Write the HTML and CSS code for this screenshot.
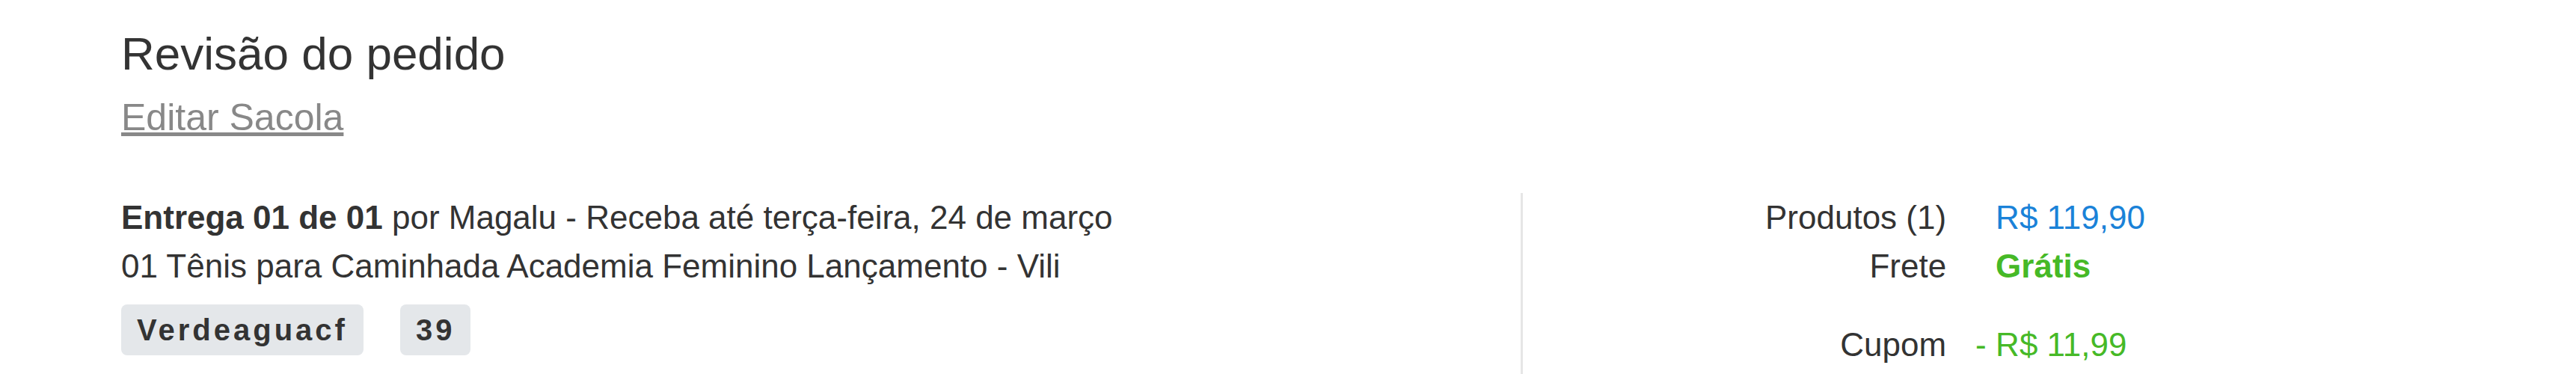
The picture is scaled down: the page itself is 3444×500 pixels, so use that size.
FILE: index.html
```html
<!DOCTYPE html>
<html lang="pt-BR">
<head>
<meta charset="utf-8">
<title>Revisão do pedido</title>
<link rel="stylesheet" href="styles.css">
</head>
<body>
<main class="review">
  <header class="review-head">
    <h1 class="review-title">Revisão do pedido</h1>
    <a class="edit-link" href="#">Editar Sacola</a>
  </header>
  <section class="review-body">
    <div class="delivery">
      <p class="delivery-line"><strong>Entrega 01 de 01</strong> por Magalu - Receba até terça-feira, 24 de março</p>
      <p class="delivery-line">01 Tênis para Caminhada Academia Feminino Lançamento - Vili</p>
      <div class="tags">
        <span class="tag">Verdeaguacf</span>
        <span class="tag">39</span>
      </div>
    </div>
    <div class="summary">
      <div class="summary-grid">
        <span class="label">Produtos (1)</span>
        <span class="value value-blue">R$ 119,90</span>
        <span class="label">Frete</span>
        <span class="value value-free">Grátis</span>
        <span class="label label-gap">Cupom</span>
        <span class="value value-green label-gap"><span class="minus">-</span>R$ 11,99</span>
      </div>
    </div>
  </section>
</main>
</body>
</html>
```

FILE: styles.css
```css
* {
  box-sizing: border-box;
}

html, body {
  margin: 0;
  padding: 0;
  background: #ffffff;
}

body {
  font-family: "Liberation Sans", Arial, sans-serif;
  color: #333333;
}

.review {
  padding: 37px 0 0 162px;
}

.review-head {
  display: flex;
  flex-direction: column;
  align-items: flex-start;
}

.review-title {
  margin: 0;
  font-size: 62px;
  font-weight: 400;
  line-height: 70px;
  color: #333333;
}

.edit-link {
  margin-top: 20px;
  font-size: 50px;
  line-height: 60px;
  color: #888888;
  text-decoration: underline;
}

.review-body {
  display: flex;
  margin-top: 71px;
}

.delivery {
  width: 1871px;
  flex: 0 0 auto;
  padding-bottom: 80px;
}

.delivery-line {
  margin: 0;
  font-size: 44px;
  line-height: 65px;
  color: #333333;
}

.delivery-line strong {
  font-weight: 700;
}

.tags {
  display: flex;
  gap: 49px;
  margin-top: 19px;
}

.tag {
  display: inline-block;
  padding: 10px 21px;
  background: #e4e7ea;
  border-radius: 8px;
  font-size: 40px;
  line-height: 48px;
  font-weight: 700;
  letter-spacing: 4px;
  color: #333333;
}

.summary {
  border-left: 3px solid #e6e6e6;
  padding-left: 324px;
  padding-bottom: 80px;
}

.summary-grid {
  display: grid;
  grid-template-columns: auto auto;
  column-gap: 66px;
  justify-content: start;
  font-size: 44px;
  line-height: 65px;
}

.label {
  text-align: right;
  color: #333333;
}

.value {
  text-align: left;
}

.value-blue {
  color: #1a82d8;
}

.value-free {
  color: #46b927;
  font-weight: 700;
}

.value-green {
  color: #46b927;
}

.label-gap {
  margin-top: 40px;
}

.minus {
  display: inline-block;
  margin-left: -27px;
  width: 27px;
}
```
